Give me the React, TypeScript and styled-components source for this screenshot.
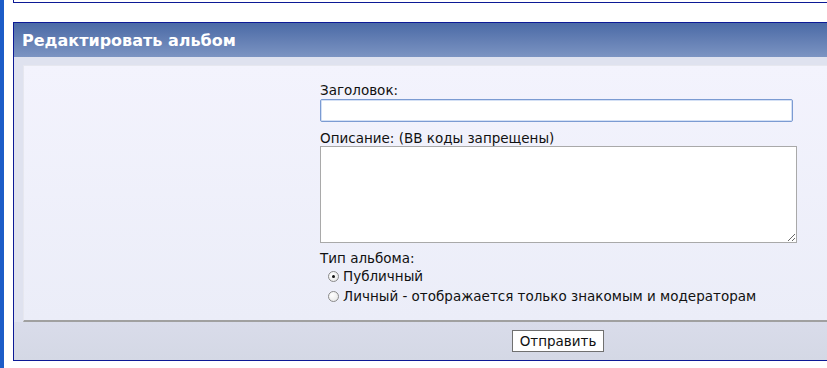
import React, { useState } from 'react';
import styled, { createGlobalStyle } from 'styled-components';

// -- global --
const GlobalStyle = createGlobalStyle`
  html, body {
    margin: 0;
    padding: 0;
    overflow: hidden;
    background-color: #ffffff;
    font-family: 'DejaVu Sans', Verdana, sans-serif;
  }
`;

// -- styled components --
const Page = styled.div`
  display: flex;
  height: 100vh;
`;

const SideStrip = styled.div`
  flex: 0 0 4px;
  background-color: #1c5cc8;
`;

const Content = styled.div`
  display: flex;
  flex-direction: column;
  flex: 1;
  padding-left: 9px;
  overflow: hidden;
`;

const PrevPanel = styled.div`
  flex: 0 0 auto;
  width: 1088px;
  height: 2px;
  border-left: 1px solid #0c1a96;
  border-bottom: 1px solid #0c1a96;
  background-color: #ffffff;
`;

const Panel = styled.form`
  flex: 0 0 auto;
  width: 1088px;
  margin: 19px 0 0 0;
  border: 1px solid #0c1a96;
  border-right: none;
`;

const Header = styled.div`
  display: flex;
  align-items: center;
  height: 34px;
  padding: 0 8px;
  background: linear-gradient(to bottom, #4b6aa6 0%, #7c94c2 100%);
  color: #ffffff;
  font-size: 16px;
  font-weight: bold;
`;

const Body = styled.div`
  padding: 8px 0 0 9px;
  background-color: #dfe2ef;
`;

const Inner = styled.div`
  display: grid;
  grid-template-columns: 296px 1fr;
  padding: 16px 0 14px 0;
  border-top: 1px solid #e6e7ef;
  border-left: 1px solid #e6e7ef;
  border-bottom: 2px solid #a0a0a0;
  background: linear-gradient(to bottom, #f3f3fd 0%, #ebedf8 100%);
`;

const FormColumn = styled.div`
  display: flex;
  flex-direction: column;
  font-size: 13.5px;
  color: #111111;
`;

const Label = styled.div<{ $gap: number }>`
  margin-top: ${(props): number => {
    return props.$gap;
  }}px;
  height: 16px;
  line-height: 16px;
  white-space: nowrap;
`;

const TitleInput = styled.input`
  box-sizing: border-box;
  width: 473px;
  height: 23px;
  margin: 1px 0 0 0;
  padding: 2px 4px;
  border: 1px solid #7b9bd2;
  border-radius: 2px;
  box-shadow: inset 0 0 0 1px #d4e0f5;
  background-color: #ffffff;
  font-family: inherit;
  font-size: 13px;
  outline: none;
`;

const DescriptionArea = styled.textarea`
  box-sizing: border-box;
  width: 477px;
  height: 97px;
  margin: 0;
  padding: 2px;
  border: 1px solid #a9a9a9;
  background-color: #ffffff;
  font-family: inherit;
  font-size: 13px;
  outline: none;
`;

const RadioRow = styled.label`
  display: flex;
  align-items: center;
  height: 20px;
  padding-left: 8px;
  gap: 4px;
  white-space: nowrap;
  cursor: pointer;
`;

const Radio = styled.input`
  appearance: none;
  box-sizing: border-box;
  display: grid;
  place-items: center;
  width: 11px;
  height: 11px;
  margin: 0;
  border: 1px solid #8a8a8a;
  border-radius: 50%;
  background: radial-gradient(circle at 35% 35%, #ffffff 0%, #e4e4e4 100%);
  cursor: pointer;

  &:checked::after {
    content: '';
    width: 3px;
    height: 3px;
    border-radius: 50%;
    background-color: #111111;
  }
`;

const Footer = styled.div`
  display: flex;
  justify-content: center;
  padding: 8px 0;
  background: linear-gradient(to bottom, #d9dcea 0%, #d4d8e5 100%);
`;

const SubmitButton = styled.button`
  box-sizing: border-box;
  width: 92px;
  height: 22px;
  padding: 0;
  border: 1px solid #707070;
  background-color: #ffffff;
  color: #111111;
  font-family: inherit;
  font-size: 13.5px;
  cursor: pointer;
`;

const App: React.FC = () => {
  const [title, setTitle] = useState<string>('');
  const [description, setDescription] = useState<string>('');
  const [albumType, setAlbumType] = useState<string>('public');

  const onChangeTitle = (event: React.ChangeEvent<HTMLInputElement>): void => {
    setTitle(event.target.value);
  };

  const onChangeDescription = (
    event: React.ChangeEvent<HTMLTextAreaElement>,
  ): void => {
    setDescription(event.target.value);
  };

  const onSubmit = (event: React.FormEvent<HTMLFormElement>): void => {
    event.preventDefault();
  };

  return (
    <>
      <GlobalStyle />
      <Page>
        <SideStrip />
        <Content>
          <PrevPanel />
          <Panel onSubmit={onSubmit}>
            <Header>Редактировать альбом</Header>
            <Body>
              <Inner>
                <div />
                <FormColumn>
                  <Label $gap={0}>Заголовок:</Label>
                  <TitleInput type="text" value={title} onChange={onChangeTitle} />
                  <Label $gap={8}>Описание: (BB коды запрещены)</Label>
                  <DescriptionArea
                    value={description}
                    onChange={onChangeDescription}
                  />
                  <Label $gap={7}>Тип альбома:</Label>
                  <RadioRow>
                    <Radio
                      type="radio"
                      name="albumType"
                      checked={albumType === 'public'}
                      onChange={(): void => setAlbumType('public')}
                    />
                    Публичный
                  </RadioRow>
                  <RadioRow>
                    <Radio
                      type="radio"
                      name="albumType"
                      checked={albumType === 'private'}
                      onChange={(): void => setAlbumType('private')}
                    />
                    Личный - отображается только знакомым и модераторам
                  </RadioRow>
                </FormColumn>
              </Inner>
            </Body>
            <Footer>
              <SubmitButton type="submit">Отправить</SubmitButton>
            </Footer>
          </Panel>
        </Content>
      </Page>
    </>
  );
};

export default App;
